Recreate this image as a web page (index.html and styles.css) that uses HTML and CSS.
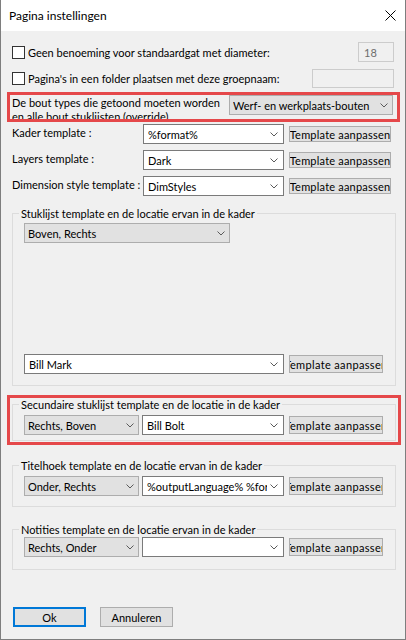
FILE: index.html
```html
<!DOCTYPE html>
<html lang="nl">
<head>
<meta charset="utf-8">
<title>Pagina instellingen</title>
<link rel="stylesheet" href="styles.css">
</head>
<body>
<div class="window">
  <div class="titlebar">
    <span class="title">Pagina instellingen</span>
    <svg class="close" width="11" height="11" viewBox="0 0 11 11"><path d="M0.5 0.5L10.5 10.5M10.5 0.5L0.5 10.5" stroke="#000" stroke-width="1" fill="none"/></svg>
  </div>
  <div class="content">
    <div class="check-row row1">
      <span class="checkbox"></span>
      <span class="check-label">Geen benoeming voor standaardgat met diameter:</span>
      <span class="textbox disabled tb-small">18</span>
    </div>
    <div class="check-row row2">
      <span class="checkbox"></span>
      <span class="check-label">Pagina's in een folder plaatsen met deze groepnaam:</span>
      <span class="textbox disabled tb-wide"></span>
    </div>
    <div class="highlight hl-bout">
      <div class="bout-row">
        <div class="bout-label">De bout types die getoond moeten worden<br>en alle bout stuklijsten (override)</div>
        <div class="combo gray w-bout"><span class="ctext">Werf- en werkplaats-bouten</span><svg class="chev" width="8" height="5" viewBox="0 0 8 5"><path d="M0.5 0.5L4 4L7.5 0.5" stroke="#5a5a5a" fill="none"/></svg></div>
      </div>
    </div>
    <div class="field-row first">
      <span class="field-label">Kader template :</span>
      <div class="combo white w-field"><span class="ctext">%format%</span><svg class="chev" width="8" height="5" viewBox="0 0 8 5"><path d="M0.5 0.5L4 4L7.5 0.5" stroke="#5a5a5a" fill="none"/></svg></div>
      <span class="btn btn-top">Template aanpassen</span>
    </div>
    <div class="field-row">
      <span class="field-label">Layers template :</span>
      <div class="combo white w-field"><span class="ctext">Dark</span><svg class="chev" width="8" height="5" viewBox="0 0 8 5"><path d="M0.5 0.5L4 4L7.5 0.5" stroke="#5a5a5a" fill="none"/></svg></div>
      <span class="btn btn-top">Template aanpassen</span>
    </div>
    <div class="field-row">
      <span class="field-label">Dimension style template :</span>
      <div class="combo white w-field"><span class="ctext">DimStyles</span><svg class="chev" width="8" height="5" viewBox="0 0 8 5"><path d="M0.5 0.5L4 4L7.5 0.5" stroke="#5a5a5a" fill="none"/></svg></div>
      <span class="btn btn-top">Template aanpassen</span>
    </div>

    <div class="group g1">
      <span class="legend">Stuklijst template en de locatie ervan in de kader</span>
      <div class="combo gray w-pos-wide g1-pos"><span class="ctext">Boven, Rechts</span><svg class="chev" width="8" height="5" viewBox="0 0 8 5"><path d="M0.5 0.5L4 4L7.5 0.5" stroke="#5a5a5a" fill="none"/></svg></div>
      <div class="group-row g1-bill">
        <div class="combo white w-bill"><span class="ctext">Bill Mark</span><svg class="chev" width="8" height="5" viewBox="0 0 8 5"><path d="M0.5 0.5L4 4L7.5 0.5" stroke="#5a5a5a" fill="none"/></svg></div>
        <span class="btn btn-grp"><span>Template aanpassen</span></span>
      </div>
    </div>

    <div class="highlight hl-group">
      <div class="group g2">
        <span class="legend">Secundaire stuklijst template en de locatie in de kader</span>
        <div class="group-row">
          <div class="combo gray w-pos"><span class="ctext">Rechts, Boven</span><svg class="chev" width="8" height="5" viewBox="0 0 8 5"><path d="M0.5 0.5L4 4L7.5 0.5" stroke="#5a5a5a" fill="none"/></svg></div>
          <div class="combo white w-tpl"><span class="ctext">Bill Bolt</span><svg class="chev" width="8" height="5" viewBox="0 0 8 5"><path d="M0.5 0.5L4 4L7.5 0.5" stroke="#5a5a5a" fill="none"/></svg></div>
          <span class="btn btn-grp"><span>Template aanpassen</span></span>
        </div>
      </div>
    </div>

    <div class="group g3">
      <span class="legend">Titelhoek template en de locatie ervan in de kader</span>
      <div class="group-row">
        <div class="combo gray w-pos"><span class="ctext">Onder, Rechts</span><svg class="chev" width="8" height="5" viewBox="0 0 8 5"><path d="M0.5 0.5L4 4L7.5 0.5" stroke="#5a5a5a" fill="none"/></svg></div>
        <div class="combo white w-tpl"><span class="ctext">%outputLanguage% %format%</span><svg class="chev" width="8" height="5" viewBox="0 0 8 5"><path d="M0.5 0.5L4 4L7.5 0.5" stroke="#5a5a5a" fill="none"/></svg></div>
        <span class="btn btn-grp"><span>Template aanpassen</span></span>
      </div>
    </div>

    <div class="group g4">
      <span class="legend">Notities template en de locatie ervan in de kader</span>
      <div class="group-row">
        <div class="combo gray w-pos"><span class="ctext">Rechts, Onder</span><svg class="chev" width="8" height="5" viewBox="0 0 8 5"><path d="M0.5 0.5L4 4L7.5 0.5" stroke="#5a5a5a" fill="none"/></svg></div>
        <div class="combo white w-tpl"><span class="ctext"></span><svg class="chev" width="8" height="5" viewBox="0 0 8 5"><path d="M0.5 0.5L4 4L7.5 0.5" stroke="#5a5a5a" fill="none"/></svg></div>
        <span class="btn btn-grp"><span>Template aanpassen</span></span>
      </div>
    </div>

    <div class="footer">
      <span class="btn dlg default">Ok</span>
      <span class="btn dlg">Annuleren</span>
    </div>
  </div>
</div>
</body>
</html>
```
FILE: styles.css
```css
* { box-sizing: border-box; }
html, body { margin: 0; padding: 0; }
body {
  width: 406px;
  height: 640px;
  font-family: Lato, "Liberation Sans", sans-serif;
  font-size: 11px;
  color: #000;
  background: #f0f0f0;
}
.window {
  width: 406px;
  height: 640px;
  border: 1px solid #7e7e7e;
  border-top: none;
  background: #f0f0f0;
  display: flex;
  flex-direction: column;
  overflow: hidden;
}
.titlebar {
  flex: none;
  height: 31px;
  background: #fff;
  display: flex;
  align-items: center;
  justify-content: space-between;
  padding: 0 9px 0 8px;
}
.title { font-size: 12px; line-height: 16px; }
.close { display: block; }

.content {
  display: flex;
  flex-direction: column;
  padding: 0 9px 0 11px;
}

/* checkbox rows */
.check-row {
  display: flex;
  align-items: center;
  height: 20px;
}
.row1 { margin-top: 11px; }
.row2 { margin-top: 6px; }
.checkbox {
  flex: none;
  width: 13px;
  height: 13px;
  border: 1px solid #333;
  background: #fff;
}
.check-label { margin-left: 3px; white-space: nowrap; }
.textbox {
  margin-left: auto;
  margin-right: 2px;
  height: 20px;
  border: 1px solid #cccccc;
  background: #f0f0f0;
  color: #6d6d6d;
  display: flex;
  align-items: center;
  padding-left: 5px;
}
.tb-small { width: 36px; }
.tb-wide { width: 82px; height: 19px; }

/* highlight annotation */
.highlight { position: relative; }
.highlight::after {
  content: "";
  position: absolute;
  border: 3px solid #e5484a;
  pointer-events: none;
}
.hl-bout { margin-top: 7px; }
.hl-bout::after { top: -3px; bottom: -7px; left: -5px; right: -4px; }
.hl-group { margin-top: 18px; }
.hl-group::after { top: -9px; bottom: -4px; left: -5px; right: -5px; }

.bout-row {
  display: flex;
  align-items: flex-start;
  height: 20px;
}
.bout-label {
  flex: none;
  width: 217px;
  height: 24px;
  line-height: 14px;
  padding-top: 1px;
  overflow: hidden;
  white-space: nowrap;
}

/* combos */
.combo {
  flex: none;
  height: 20px;
  display: flex;
  align-items: center;
  justify-content: space-between;
  overflow: hidden;
}
.combo.gray { background: #e1e1e1; border: 1px solid #adadad; padding: 0 4px 0 3px; }
.combo.white { background: #fff; border: 1px solid #7a7a7a; padding: 0 5px 0 4px; }
.ctext { white-space: nowrap; overflow: hidden; flex: 1; min-width: 0; }
.chev { flex: none; display: block; margin-left: 3px; }
.w-bout { width: 164px; }
.w-field { width: 141px; }
.w-pos-wide { width: 206px; }
.w-pos { width: 115px; }
.w-tpl { width: 142px; margin-left: 3px; }
.w-bill { width: 260px; }

/* field rows */
.field-row {
  display: flex;
  align-items: center;
  height: 20px;
  margin-top: 6px;
}
.field-row.first { margin-top: 9px; }
.field-label {
  flex: none;
  width: 131px;
  padding-bottom: 4px;
  white-space: nowrap;
}

/* buttons */
.btn {
  flex: none;
  display: flex;
  align-items: center;
  justify-content: center;
  background: #e1e1e1;
  border: 1px solid #adadad;
  white-space: nowrap;
  overflow: hidden;
}
.btn-top { width: 102px; height: 16px; margin-left: 5px; letter-spacing: 0.2px; }
.btn-grp { width: 94px; height: 18px; margin-left: 5px; letter-spacing: 0.35px; }
.btn-grp span { flex: none; }

/* groups */
.group {
  border: 1px solid #dcdcdc;
  display: flex;
  flex-direction: column;
  align-items: flex-start;
  padding: 0 0 0 11px;
  width: 384px;
}
.legend {
  margin: -8px 0 0 -5px;
  padding: 0 2px;
  line-height: 15px;
  background: #f0f0f0;
  white-space: nowrap;
}
.group-row {
  display: flex;
  align-items: center;
  height: 20px;
}
.g1 { margin-top: 17px; padding-bottom: 11px; }
.g1-pos { margin-top: 2px; }
.g1-bill { margin-top: 111px; }
.g2 { padding-bottom: 5px; }
.g2 .group-row { margin-top: 3px; }
.g3 { margin-top: 24px; padding-bottom: 10px; }
.g3 .group-row { margin-top: 3px; }
.g4 { margin-top: 22px; padding-bottom: 12px; }
.g4 .group-row { margin-top: 0; }

/* footer */
.footer {
  display: flex;
  margin-top: 37px;
  padding-left: 1px;
}
.dlg { width: 73px; height: 20px; }
.dlg + .dlg { margin-left: 14px; }
.dlg.default { border: 2px solid #0078d7; }
```
